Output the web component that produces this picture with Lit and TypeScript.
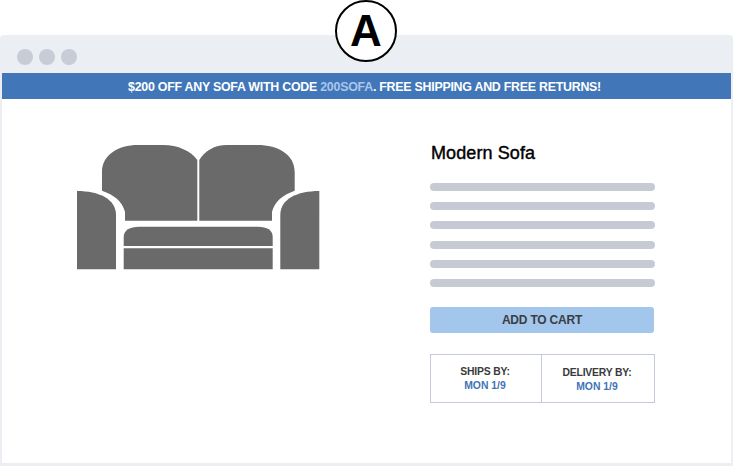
import { LitElement, html, css } from "lit";
import { customElement } from "lit/decorators.js";

@customElement("app-root")
export class AppRoot extends LitElement {
  static styles = css`
    :host { display: block; position: relative; width: 733px; height: 466px; background: #fff; overflow: hidden; font-family: "Liberation Sans", Arial, sans-serif; }
    .badge { position: absolute; left: 335px; top: 0; width: 62px; height: 62px; box-sizing: border-box; border: 2px solid #000; border-radius: 50%; background: #fff; display: flex; align-items: center; justify-content: center; font-size: 44px; font-weight: 700; color: #000; line-height: 1; }
    .frame { position: absolute; left: 0; right: 0; top: 35px; bottom: 0; box-sizing: border-box; background: #ebeef3; border-radius: 4px 4px 0 0; padding: 0 2px 3px 2px; display: flex; flex-direction: column; }
    .bar { height: 38px; flex: none; display: flex; align-items: center; gap: 6px; padding: 5px 0 0 15px; box-sizing: border-box; }
    .dot { width: 16px; height: 16px; border-radius: 50%; background: #c8ccd6; }
    .banner { height: 26px; flex: none; box-sizing: border-box; padding: 1px 4px 0 0; background: #4177b8; color: #fff; font-weight: 700; font-size: 12.4px; letter-spacing: -0.25px; display: flex; align-items: center; justify-content: center; white-space: pre; }
    .code { color: #abc6ea; }
    .content { flex: 1; background: #fff; display: flex; }
    .left { width: 428px; flex: none; padding: 46px 0 0 75px; box-sizing: border-box; }
    .sofa { display: block; width: 243px; height: 125px; fill: #6a6a6a; }
    .right { width: 225px; padding-top: 44px; display: flex; flex-direction: column; }
    h1 { margin: 0 0 0 1px; font-size: 18px; line-height: 20px; font-weight: 400; color: #000; -webkit-text-stroke: 0.4px #000; letter-spacing: 0.1px; }
    .lines { margin-top: 20px; display: flex; flex-direction: column; gap: 11.2px; }
    .line { height: 8px; border-radius: 4px; background: #c5cad5; }
    .btn { margin-top: 20px; width: 224px; height: 26px; border-radius: 3px; background: #a2c6ec; color: #3a3d42; font-size: 12px; letter-spacing: -0.2px; font-weight: 700; display: flex; align-items: center; justify-content: center; }
    .table { margin-top: 21px; height: 49px; box-sizing: border-box; border: 1px solid #c5c9dc; display: grid; grid-template-columns: 110px 1fr; font-size: 10.4px; letter-spacing: -0.2px; font-weight: 700; text-align: center; line-height: 14px; }
    .cell { display: flex; flex-direction: column; justify-content: center; color: #3a3a3a; padding: 1px 2px 0 0; }
    .cell + .cell { border-left: 1px solid #c5c9dc; padding-top: 3px; }
    .date { color: #3f74b9; letter-spacing: 0; }
  `;

  render() {
    return html`
      <div class="frame">
        <div class="bar"><span class="dot"></span><span class="dot"></span><span class="dot"></span></div>
        <div class="banner">$200 OFF ANY SOFA WITH CODE <span class="code">200SOFA</span>. FREE SHIPPING AND FREE RETURNS!</div>
        <div class="content">
          <div class="left">
            <svg class="sofa" viewBox="77 145 243 125" aria-hidden="true">
              <path d="M102 190.7V172C102 155 118 145 138 145H163C178 145 191 151 197.3 160V220.7H125V211.7C122 201 114 195 102 190.7Z"/>
              <path d="M294.7 190.7V172C294.7 155 279 145 257 145H227C214 145 205 151 199.3 160V220.7H272V211.7C275 201 283 195 294.7 190.7Z"/>
              <path d="M77 191C99 191 116 199 116 215V269.3H77Z"/>
              <path d="M319.3 191C297 191 280.3 199 280.3 215V269.3H319.3Z"/>
              <path d="M123.7 246V237C123.7 230 130 226.7 139 226.7H258C267 226.7 272.7 230 272.7 237V246Z"/>
              <path d="M123.7 248.3H272.7V269.3H123.7Z"/>
            </svg>
          </div>
          <div class="right">
            <h1>Modern Sofa</h1>
            <div class="lines">
              ${[0, 1, 2, 3, 4, 5].map(() => html`<div class="line"></div>`)}
            </div>
            <div class="btn">ADD TO CART</div>
            <div class="table">
              <div class="cell"><span>SHIPS BY:</span><span class="date">MON 1/9</span></div>
              <div class="cell"><span>DELIVERY BY:</span><span class="date">MON 1/9</span></div>
            </div>
          </div>
        </div>
      </div>
      <div class="badge">A</div>
    `;
  }
}
